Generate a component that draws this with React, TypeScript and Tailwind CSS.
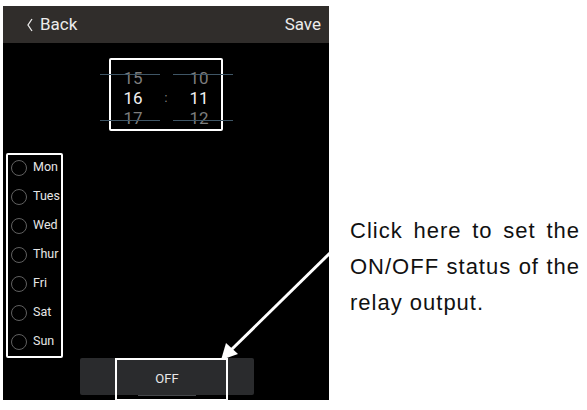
import React from 'react';

const days = ['Mon', 'Tues', 'Wed', 'Thur', 'Fri', 'Sat', 'Sun'];

function PickerColumn({ values }: { values: string[] }) {
  return (
    <div className="flex flex-col items-center w-[40px]">
      {values.map((v, i) => (
        <span
          key={v}
          className={
            'h-[20px] leading-[20px] text-[17px] ' + (i === 1 ? 'text-[#f2f2f2]' : 'text-[#7d7d7d]')
          }
        >
          {v}
        </span>
      ))}
    </div>
  );
}

export default function App() {
  return (
    <div
      className="relative w-[587px] h-[410px] bg-white flex overflow-hidden"
      style={{ fontFamily: 'Roboto, "Liberation Sans", Arial, sans-serif' }}
    >
      {/* phone screen */}
      <div className="ml-[3px] mt-[6px] w-[326px] h-[394px] bg-black flex flex-col">
        <div className="h-[37px] bg-[#302d2b] flex items-center justify-between pl-[24px] pr-[8px] text-[#ececec] text-[17px]">
          <span className="flex items-center gap-[7px]">
            <svg width="6" height="14" viewBox="0 0 6 14" className="mt-[1px]">
              <polyline points="5,1 1,7 5,13" fill="none" stroke="#ececec" strokeWidth="1.3" />
            </svg>
            <span>Back</span>
          </span>
          <span>Save</span>
        </div>

        {/* time picker */}
        <div className="relative mt-[15px] ml-[106px] w-[114px] h-[73px] border-2 border-white rounded-[2px] flex items-center justify-between px-[2px] pt-[6px]">
          <PickerColumn values={['15', '16', '17']} />
          <span className="text-[#8a8a8a] text-[12px]">:</span>
          <PickerColumn values={['10', '11', '12']} />
          <div className="absolute left-[-11px] top-[14px] w-[60px] h-px bg-[#3f5666]" />
          <div className="absolute left-[-11px] top-[60px] w-[60px] h-px bg-[#3f5666]" />
          <div className="absolute left-[62px] top-[14px] w-[60px] h-px bg-[#3f5666]" />
          <div className="absolute left-[62px] top-[60px] w-[60px] h-px bg-[#3f5666]" />
        </div>

        {/* weekdays */}
        <div className="mt-[22px] ml-[3px] w-[57px] h-[205px] border-2 border-white rounded-[2px] flex flex-col overflow-hidden">
          {days.map((d) => (
            <div key={d} className="h-[29px] flex items-center gap-[6px] pl-[3px] shrink-0 first:mt-[-2px]">
              <span className="w-[16px] h-[16px] rounded-full border border-[#606060] shrink-0" />
              <span className="text-[#e6e6e6] text-[12.5px]">{d}</span>
            </div>
          ))}
        </div>

        {/* on/off button */}
        <div className="relative ml-[77px] w-[174px] h-[37px] bg-[#2a2b2d] rounded-[2px] flex flex-col items-center">
          <span className="mt-[11px] text-[#e8e8e8] text-[13px]">OFF</span>
          <span className="mt-[6px] w-[58px] h-px bg-[#45474a]" />
          <div className="absolute left-[35px] top-0 w-[113px] h-[43px] border-2 border-white" />
        </div>
      </div>

      {/* annotation text */}
      <p
        className="ml-[21px] mt-[213px] w-[230px] text-[22px] leading-[36px] tracking-[1px] text-[#111] text-justify self-start"
        style={{ fontFamily: '"Liberation Sans", Arial, sans-serif' }}
      >
        Click here to set the ON/OFF status of the relay output.
      </p>

      {/* arrow */}
      <svg className="absolute left-0 top-0 pointer-events-none" width="587" height="410" viewBox="0 0 587 410">
        <line x1="331" y1="252" x2="229" y2="352" stroke="white" strokeWidth="3" />
        <polygon points="221,360 226,343 238,354" fill="white" />
      </svg>
    </div>
  );
}
